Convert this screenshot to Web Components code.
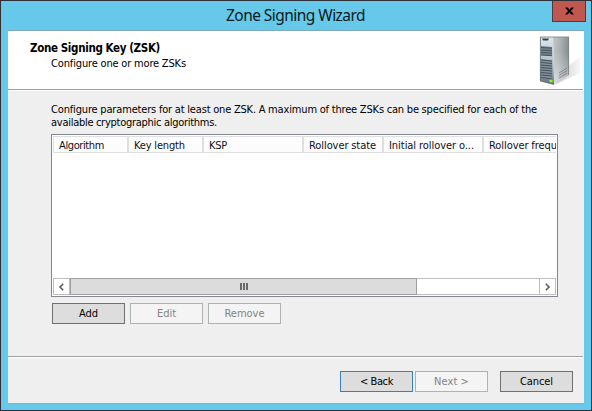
<!DOCTYPE html>
<html lang="en">
<head>
<meta charset="utf-8">
<title>Zone Signing Wizard</title>
<style>
html,body{margin:0;height:100%;overflow:hidden}
body{font:11px/13px "DejaVu Sans Condensed","DejaVu Sans",sans-serif;font-stretch:condensed;word-spacing:-.2px;color:#000}
</style>
</head>
<body>
<wizard-window>
  <fit-text slot="title" w="139">Zone Signing Wizard</fit-text>
  <wizard-header>
    <fit-text slot="heading" w="130">Zone Signing Key (ZSK)</fit-text>
    <fit-text slot="sub" w="135">Configure one or more ZSKs</fit-text>
    <server-icon slot="icon"></server-icon>
  </wizard-header>
  <wizard-body>
    <fit-text w="486">Configure parameters for at least one ZSK. A maximum of three ZSKs can be specified for each of the</fit-text>
    <fit-text w="166">available cryptographic algorithms.</fit-text>
    <list-view slot="list">
      <list-column style="width:75px"><fit-text w="45">Algorithm</fit-text></list-column>
      <list-column style="width:75px"><fit-text w="51">Key length</fit-text></list-column>
      <list-column style="width:100px"><fit-text w="18">KSP</fit-text></list-column>
      <list-column style="width:80px"><fit-text w="67">Rollover state</fit-text></list-column>
      <list-column style="width:100px"><fit-text w="85">Initial rollover o...</fit-text></list-column>
      <list-column style="width:100px"><fit-text w="68">Rollover frequ</fit-text></list-column>
    </list-view>
    <push-button slot="actions"><fit-text w="19">Add</fit-text></push-button>
    <push-button slot="actions" disabled><fit-text w="19">Edit</fit-text></push-button>
    <push-button slot="actions" disabled><fit-text w="40">Remove</fit-text></push-button>
  </wizard-body>
  <wizard-footer>
    <push-button primary><fit-text w="33">&lt; Back</fit-text></push-button>
    <push-button disabled><fit-text w="35">Next &gt;</fit-text></push-button>
    <push-button style="margin-left:10px"><fit-text w="33">Cancel</fit-text></push-button>
  </wizard-footer>
</wizard-window>
<script>
function define(name, markup, ready) {
  customElements.define(name, class extends HTMLElement {
    constructor() {
      super();
      this.attachShadow({ mode: 'open' }).innerHTML = markup;
    }
    connectedCallback() { if (ready) ready(this); }
  });
}

define('wizard-window', `<style>
:host{display:flex;flex-direction:column;box-sizing:border-box;width:592px;height:411px;border:1px solid #2d3038;background:#66c9e9;padding:0 7px 6px}
.bar{height:29px;flex:none;display:grid;grid-template-columns:34px 1fr 34px;margin-right:-2px;}
.t{grid-column:2;justify-self:center;font:15.5px/29px "Noto Sans","Open Sans",sans-serif;word-spacing:0;color:#0b1a20;padding-right:3px}
.x{box-sizing:border-box;height:21px;margin-right:0;border:1px solid #5f3438;border-top:0;background:#c1584f;display:flex;align-items:center;justify-content:center}
.client{flex:1;display:flex;flex-direction:column;background:#efefef;border-top:1px solid #7fa9c3;border-bottom:1px solid #7fb3c8;margin:0}
</style>
<div class="bar"><div class="t"><slot name="title"></slot></div>
<div class="x"><svg width="9" height="8" viewBox="0 0 10 8"><path d="M0 0H3L5 2.5L7 0H10L6.6 4L10 8H7L5 5.5L3 8H0L3.4 4Z"/></svg></div></div>
<div class="client"><slot></slot></div>`);

define('wizard-header', `<style>
:host{display:flex;justify-content:space-between;height:59px;flex:none;background:linear-gradient(#a0a0a0,#a0a0a0) 0 58px/575px 1px no-repeat #fff;box-shadow:0 1px #fff}
.txt{padding:11px 0 0 22px}
.h{font-weight:bold;font-size:11.5px;height:15px}
.s{padding-left:21px}
.i{padding:5px 3px 0 0}
</style>
<div class="txt"><div class="h"><slot name="heading"></slot></div><div class="s"><slot name="sub"></slot></div></div>
<div class="i"><slot name="icon"></slot></div>`);

define('wizard-body', `<style>
:host{display:flex;flex-direction:column;flex:1;padding:13px 26px 0 43px}
.p{display:flex;flex-direction:column;height:31px}
.a{display:flex;gap:5px;padding:6px 0 0 1px}
</style>
<div class="p"><slot></slot></div><slot name="list"></slot><div class="a"><slot name="actions"></slot></div>`);

define('wizard-footer', `<style>
:host{display:flex;justify-content:flex-end;gap:2px;box-sizing:border-box;height:47px;flex:none;background:linear-gradient(#a0a0a0,#a0a0a0) 0 0/575px 1px no-repeat,linear-gradient(#fff,#fff) 0 1px/100% 1px no-repeat;padding:15px 11px 0 0}
</style><slot></slot>`);

define('list-view', `<style>
:host{display:flex;flex-direction:column;box-sizing:border-box;width:507px;height:163px;border:1px solid #828790;padding:1px;background:#fff}
.cols{display:flex;height:17px;overflow:hidden}
.body{flex:1}
.sb{display:flex;height:17px;box-sizing:border-box}
.b{box-sizing:border-box;width:17px;height:17px;border:1px solid #bebebe;display:flex;align-items:center;justify-content:center}
.th{box-sizing:border-box;width:347px;background:#dcdcdc;border:1px solid #a0a0a0;display:flex;align-items:center;justify-content:center;gap:1px}
.th i{width:2px;height:7px;background:#6a6a6a}
.tr{box-sizing:border-box;flex:1;border:solid #bebebe;border-width:1px 0}
path{fill:none;stroke:#5c5c5c;stroke-width:1.6}
</style>
<div class="cols"><slot></slot></div><div class="body"></div>
<div class="sb"><div class="b"><svg width="7" height="8" viewBox="0 0 7 8"><path d="M5.2 .7L2 4L5.2 7.3"/></svg></div>
<div class="th"><i></i><i></i><i></i></div><div class="tr"></div>
<div class="b"><svg width="7" height="8" viewBox="0 0 7 8"><path d="M1.8 .7L5 4L1.8 7.3"/></svg></div></div>`);

define('list-column', `<style>
:host{display:block;flex:none;box-sizing:border-box;height:17px;border:1px solid #dfdfdf;background:#fcfcfc;padding:2px 0 0 5px;white-space:nowrap;color:#101018}
</style><slot></slot>`);

define('push-button', `<style>
:host{display:flex;flex:none;box-sizing:border-box;width:73px;height:21px;border:1px solid #707070;background:#dddddd;align-items:center;justify-content:center}
:host([disabled]){border-color:#adb2b5;background:#f4f4f4;color:#838383}
:host([primary]){border-color:#3c7fb1}
</style><slot></slot>`);

/* Spreads its letters so that the line is exactly w pixels wide. */
define('fit-text', `<style>
:host{display:block;white-space:pre}
span{display:inline-block}
</style><span><slot></slot></span>`, el => {
  const span = el.shadowRoot.querySelector('span');
  const w = +el.getAttribute('w');
  const n = el.textContent.length;
  const gap = (w - span.getBoundingClientRect().width) / n;
  span.style.letterSpacing = gap + 'px';
});

define('server-icon', `<style>:host{display:block}svg{display:block}</style>
<svg width="42" height="50" viewBox="0 0 42 50">
<defs>
<linearGradient id="s" x1="0" y1="0" x2="1" y2=".2"><stop offset="0" stop-color="#c3c7c8"/><stop offset=".5" stop-color="#a9afb0"/><stop offset="1" stop-color="#858c8d"/></linearGradient>
<linearGradient id="f" x1="0" y1="0" x2="0" y2="1"><stop offset="0" stop-color="#dce8ec"/><stop offset=".5" stop-color="#b5c2c9"/><stop offset="1" stop-color="#66727e"/></linearGradient>
<linearGradient id="h" x1="0" y1="0" x2="1" y2="0"><stop offset="0" stop-color="#ccc"/><stop offset="1" stop-color="#f6f6f6"/></linearGradient>
<linearGradient id="g" x1="0" y1="0" x2="0" y2="1"><stop offset="0" stop-color="#fff" stop-opacity="0"/><stop offset="1" stop-color="#fff" stop-opacity=".5"/></linearGradient>
</defs>
<path d="M29 30L41 21V37L16 48.5Z" fill="url(#h)"/>
<path d="M14 1H30V39L15 48.5Z" fill="url(#s)"/>
<path d="M14 15H30V39L15 48.5Z" fill="url(#g)"/>
<path d="M1 1H14L15 48.5L1 45Z" fill="url(#f)"/>
<path d="M1 1H30" stroke="#8a9294"/>
<path d="M29.6 1V39" stroke="#7b8284" stroke-width=".8"/>
<path d="M3 2.5H10L9 4.5H4Z" fill="#34414a"/>
<path d="M2 10L13 11V20L2 19Z" fill="#77848f"/>
<path d="M2 23L13 24.5V44L2 42Z" fill="#828e98"/>
<path d="M2 11.5L13 12.2M2 14L13 14.7M2 16.5L13 17.2M2 19L13 19.7M2 24L13 25M2 26.5L13 27.5M2 29L13 30M2 31.5L13 32.5M2 34L13 35M2 36.5L13 37.5M2 39L13 40M2 41.5L13 43" stroke="#46535f"/>
<path d="M1.4 1V45L15 48.5" fill="none" stroke="#5d6871" stroke-width=".8"/>
<path d="M20 37L28 32M20 39.5L28 34.5M20 42L28 37" stroke="#7d8587" stroke-width=".9"/>
<path d="M10.5 43.5L13.5 44V46.5L10.5 46Z" fill="#8dfa18"/>
</svg>`);
</script>
</body>
</html>
